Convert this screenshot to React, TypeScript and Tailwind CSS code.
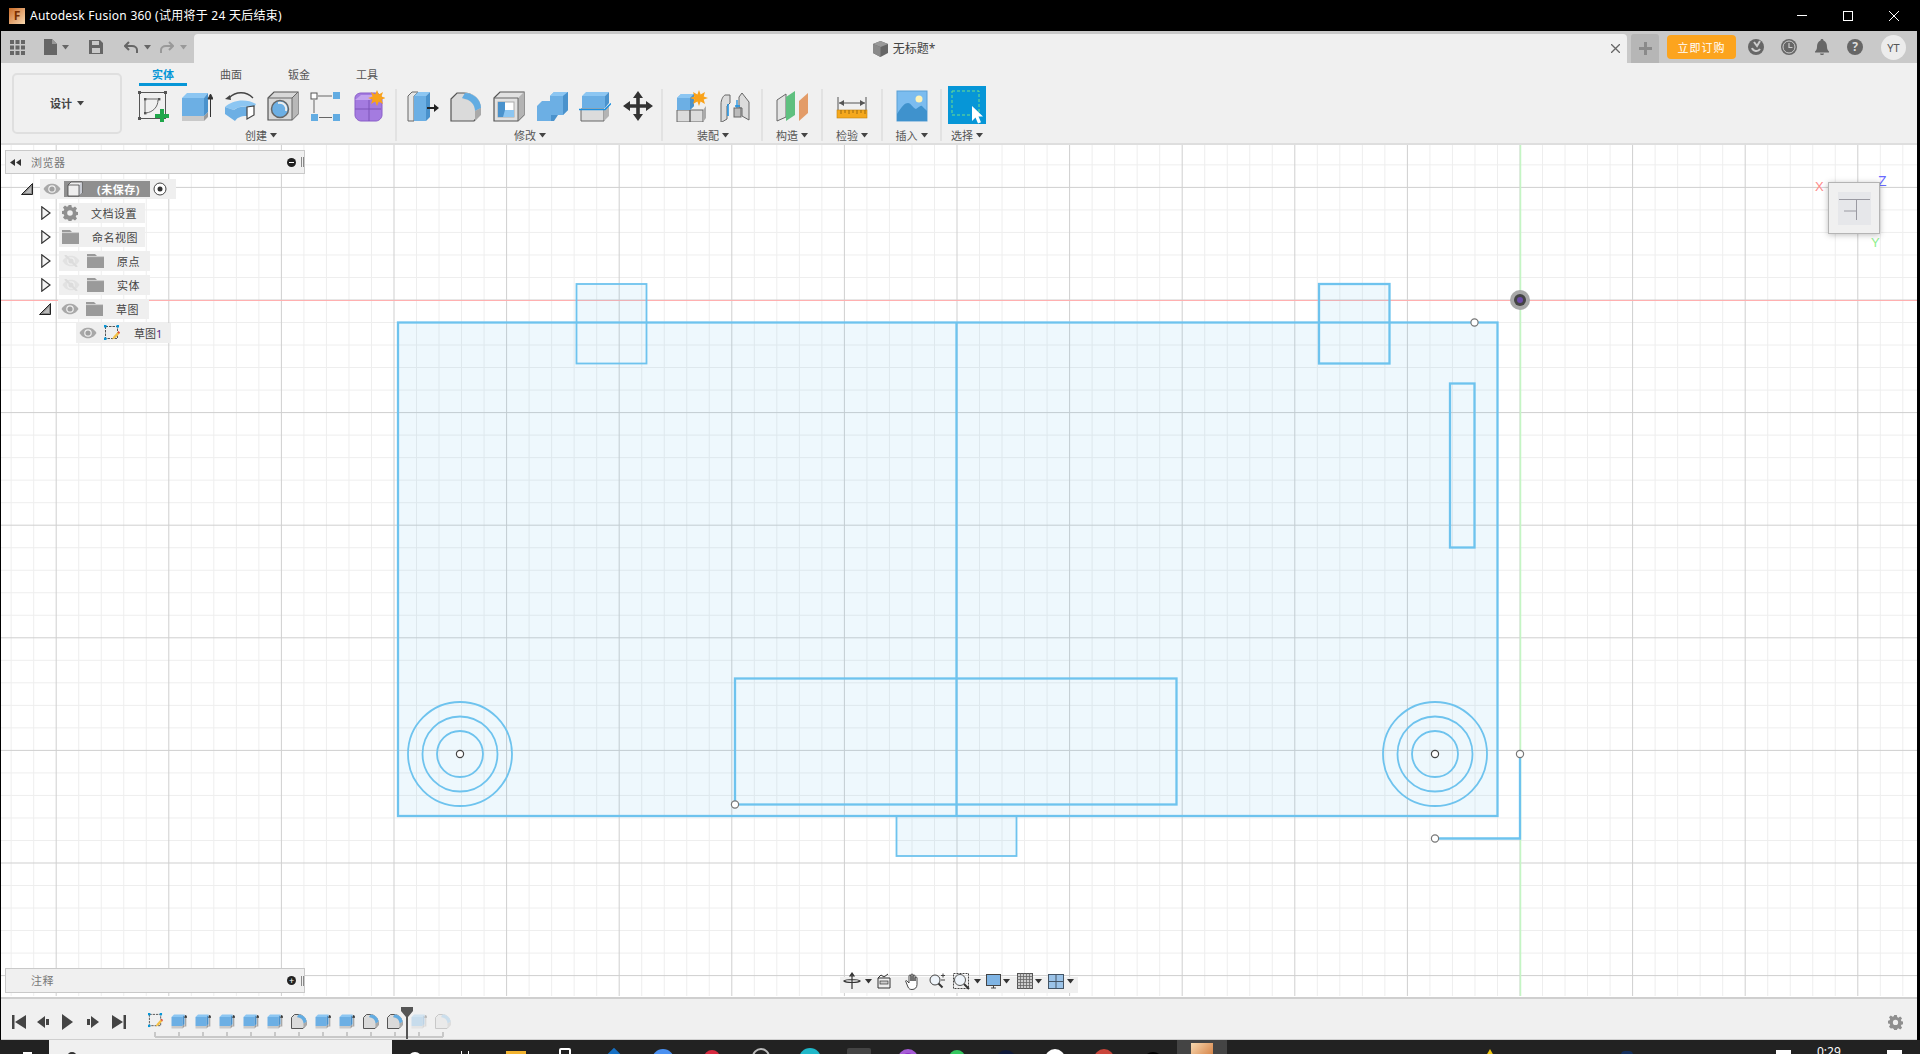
import React from "react";

type P = { s?: number; o?: number };
const V = ({ s = 32, o = 1, w = 32, h = 32, children }: P & { w?: number; h?: number; children: React.ReactNode }) => (
  <svg width={s} height={(s * h) / w} viewBox={`0 0 ${w} ${h}`} opacity={o} className="block shrink-0">
    {children}
  </svg>
);

const SketchIcon = ({ s = 32 }: P) => (
  <V s={s}>
    <rect x="1.5" y="2.5" width="26" height="26" fill="none" stroke="#555" strokeWidth="1" />
    {[[1.5, 2.5], [27.5, 2.5], [1.5, 28.5]].map(([x, y], i) => (
      <rect key={i} x={x - 1.5} y={y - 1.5} width="3" height="3" fill="#555" />
    ))}
    <path d="M7 23V9h14M20 10C20 17 15 22 8 23" fill="none" stroke="#666" strokeWidth="1" />
    <rect x="6" y="8" width="2.4" height="2.4" fill="#555" /><rect x="20" y="8" width="2.4" height="2.4" fill="#555" /><rect x="6" y="22" width="2.4" height="2.4" fill="#555" />
    <path d="M22 19h4v5h5v4h-5v4h-4v-4h-5v-4h5z" fill="#1fa64a" />
  </V>
);
const MiniSketch = ({ s = 15 }: P) => (
  <V s={s}>
    <rect x="3" y="3" width="24" height="24" fill="none" stroke="#555" strokeWidth="2" strokeDasharray="5 2" />
    {[[0, 0], [25, 0], [0, 25]].map(([x, y], i) => (
      <rect key={i} x={x} y={y} width="5" height="5" fill="#0696d7" />
    ))}
    <path d="M16 29l3-6 8-9 4 3-8 9z" fill="#f4c045" /><path d="M27 14l2-2 3 3-2 3z" fill="#e0483a" />
  </V>
);
const Extrude = ({ s = 32, o = 1, arrow = true }: P & { arrow?: boolean }) => (
  <V s={s} o={o}>
    <path d="M1 26h22v5H1z" fill="#c9c9c9" /><path d="M23 26l4-4v5l-4 4z" fill="#9b9b9b" />
    <path d="M1 8h22v18H1z" fill="#6cafe4" /><path d="M1 8l5-5h21l-4 5z" fill="#8cc6f2" /><path d="M23 8l4-5v19l-4 4z" fill="#4a92cc" />
    {arrow && <path d="M29.5 27V6M27 9l2.500-5 2.500 5z" stroke="#333" strokeWidth="1" fill="#333" />}
  </V>
);
const Revolve = () => (
  <V>
    <path d="M5 8C12 1 22 1 29 8" fill="none" stroke="#444" strokeWidth="1.300" /><path d="M1 9l5-4 1 5z" fill="#444" />
    <path d="M1 17C8 10 22 8 32 14l-3 5C22 15 14 16 10 20z" fill="#8cc6f2" />
    <path d="M1 17l9 3c3-3 8-4 13-3v9C16 26 13 28 11 31l-10-7z" fill="#6cafe4" />
    <path d="M23 17l7-1v9l-7 4z" fill="#fff" stroke="#444" strokeWidth="1.200" />
  </V>
);
const Hole = () => (
  <V>
    <path d="M1 8l6-6h24v22l-6 6H1z" fill="#d8d8d8" stroke="#555" strokeWidth="1.200" /><path d="M25 8l6-6v22l-6 6z" fill="#b8b8b8" /><path d="M1 8h24l6-6M25 8v22" fill="none" stroke="#666" />
    <circle cx="13" cy="19" r="8.500" fill="#6cafe4" stroke="#666" strokeWidth="1.500" /><path d="M10 12a8 8 0 0 1 10 9a8 8 0 0 0 -10-9" fill="#fff" /><path d="M11 13c6-1 9 3 8 8" fill="none" stroke="#eee" strokeWidth="2" />
  </V>
);
const Pattern = () => (
  <V>
    <rect x="1" y="3" width="6" height="6" fill="#fff" stroke="#555" /><rect x="23" y="2" width="7" height="7" fill="#62ace2" />
    <rect x="1" y="24" width="7" height="7" fill="#62ace2" /><rect x="23" y="24" width="7" height="7" fill="#62ace2" />
    <path d="M8 6h14M4 10v13M9 27.500h13" stroke="#666" strokeWidth="1" />
  </V>
);
const Form = () => (
  <V>
    <path d="M2 8c0-3 3-5 6-5h14c4 0 7 3 7 7v15c0 3-3 6-6 6H8c-3 0-6-3-6-6z" fill="#a47be0" stroke="#8a5fc9" />
    <path d="M2 19h26M16 9v22" stroke="#7c54b8" strokeWidth="1" /><path d="M2 10l6-5h14l-5 5z" fill="#c3a4ef" />
    <path d="M24 0l1.800 4.500L30 2l-1.500 4.500L33 8l-4.500 1.500L30 14l-4.200-2.500L24 16l-1.800-4.500L18 14l1.500-4.500L15 8l4.500-1.500L18 2l4.200 2.500z" fill="#f9a21a" />
  </V>
);
const PressPull = () => (
  <V>
    <path d="M1 6l4-4h6L7 6v25H1z" fill="#e6e6e6" stroke="#666" />
    <path d="M7 6l4-4h12l-4 4z" fill="#8cc6f2" /><path d="M7 6h12v25H7z" fill="#6cafe4" /><path d="M19 6l4-4v25l-4 4z" fill="#4a92cc" />
    <path d="M20 18h8" stroke="#222" strokeWidth="2" /><path d="M27 14l5 4-5 4z" fill="#222" />
  </V>
);
const Fillet = ({ s = 32, o = 1 }: P) => (
  <V s={s} o={o}>
    <path d="M1 9l6-6h7c8 0 16 6 16 15v6l-6 7H1z" fill="#dadada" stroke="#555" strokeWidth={s < 20 ? 2 : 1.200} />
    <path d="M16 3c8 0 15 6 15 15l-6 7v-5C24 14 21 10 12 9z" fill="#d0d0d0" />
    <path d="M15 3c9 0 16 7 16 15l-6 3c0-6-4-11-10-12l-3-1z" fill="#62ace2" />
    <path d="M25 21l6-3v7l-6 6z" fill="#a9a9a9" />
  </V>
);
const Shell = () => (
  <V>
    <path d="M1 8l6-6h24v23l-6 6H1z" fill="#e2e2e2" stroke="#555" strokeWidth="1.200" /><path d="M25 8l6-6v23l-6 6z" fill="#b4b4b4" /><path d="M1 8h24v23" fill="none" stroke="#666" />
    <rect x="5" y="12" width="16" height="15" fill="#fff" stroke="#aaa" /><path d="M5 12h7v8h9v7H5z" fill="#4a92cc" /><path d="M10 27l2-7h9v7z" fill="#8cc6f2" />
  </V>
);
const Combine = () => (
  <V>
    <path d="M14 6l4-4h14v18l-5 5H14z" fill="#6cafe4" /><path d="M14 6l4-4h14l-5 4z" fill="#8cc6f2" /><path d="M27 6l5-4v18l-5 5z" fill="#4a92cc" />
    <path d="M1 16l5-5h9v20H1z" fill="#6cafe4" /><path d="M15 25h7l-4 6h-3z" fill="#4a92cc" />
  </V>
);
const Split = () => (
  <V>
    <path d="M2 19h23v12H2z" fill="#dcdcdc" stroke="#666" /><path d="M25 20l5-5v11l-5 5z" fill="#b4b4b4" />
    <path d="M3 6l4-4h23l-4 4z" fill="#8cc6f2" /><path d="M3 6h23v12H3z" fill="#6cafe4" /><path d="M26 6l4-4v11l-4 5z" fill="#4a92cc" />
    <path d="M0 19.500h26l6-6" fill="none" stroke="#1a8fe0" strokeWidth="1.500" />
  </V>
);
const Move = () => (
  <V>
    <path d="M16 1l5 7h-3.200v6.200H24V11l7 5-7 5v-3.200h-6.200V24H21l-5 7-5-7h3.200v-6.200H8V21l-7-5 7-5v3.200h6.200V8H11z" fill="#333" />
  </V>
);
const NewJoint = () => (
  <V>
    <path d="M1 20h13v12H1zM14 20h13v12H14z" fill="#dcdcdc" stroke="#666" /><path d="M27 20l3-4v12l-3 4z" fill="#aaa" />
    <path d="M1 8l4-4h13v12l-4 4H1z" fill="#6cafe4" /><path d="M1 8l4-4h13l-4 4z" fill="#8cc6f2" /><path d="M14 8l4-4v12l-4 4z" fill="#4a92cc" />
    <path d="M23 0l1.600 4.500L29 2l-1.300 4.500L32 8l-4.300 1.500L29 14l-4.400-2.500L23 16l-1.600-4.500L17 14l1.300-4.500L14 8l4.300-1.500L17 2l4.400 2.500z" fill="#f9a21a" />
  </V>
);
const Joint = () => (
  <V>
    <path d="M2 14c0-4 2-8 4-9h5v8l-3 3v13l-5 3H2z" fill="#dcdcdc" stroke="#666" /><path d="M23 3l7 9v18l-7-4V18h-3V7z" fill="#dcdcdc" stroke="#666" />
    <path d="M9 14v12" stroke="#1a8fe0" strokeWidth="1.500" /><path d="M18 10v9M16 16h5" stroke="#1a8fe0" strokeWidth="1.300" /><rect x="15" y="18" width="7" height="9" fill="#bbb" stroke="#666" />
  </V>
);
const Plane = () => (
  <V>
    <path d="M1 10l9-6v23l-9 4z" fill="#e4e4e4" stroke="#666" /><path d="M10 7l9-6v24l-9 6z" fill="#5fc07f" /><path d="M23 11l9-8v20l-9 8z" fill="#e39c68" />
  </V>
);
const Measure = () => (
  <V>
    <path d="M2 7v16M30 7v16M3 13h26" stroke="#555" strokeWidth="1" fill="none" /><path d="M3 13l5-3v6zM29 13l-5-3v6z" fill="#555" />
    <rect x="1" y="20" width="30" height="8" fill="#f5a81c" stroke="#c4830e" strokeWidth=".6" />
    <path d="M5 20v4M9 20v3M13 20v4M17 20v3M21 20v4M25 20v3M29 20v4" stroke="#7a5208" strokeWidth=".7" />
  </V>
);
const InsertIcon = () => (
  <V>
    <rect x="1" y="1" width="30" height="30" fill="#7bbcef" stroke="#5b9fd6" />
    <circle cx="23" cy="9" r="3.500" fill="#fdf3b8" />
    <path d="M1 24c5-8 8-11 11-11s5 5 8 6c3-2 5-4 6-3s3 3 5 5v10H1z" fill="#3f92cd" />
  </V>
);
const SelectIcon = () => (
  <div className="w-[38px] h-[38px] bg-[#0696d7] shrink-0">
    <svg width="38" height="38" viewBox="0 0 38 38" className="block">
      <rect x="4" y="5" width="27" height="24" fill="none" stroke="#6fe08a" strokeWidth="1" strokeDasharray="3 2" />
      <path d="M24 20v15l3.500-3.500 2.500 6 3-1.300-2.500-5.700H35z" fill="#fff" />
    </svg>
  </div>
);

const Caret = ({ c = "#444", cls = "" }: { c?: string; cls?: string }) => (
  <svg width="7" height="5" viewBox="0 0 7 5" className={`block shrink-0 ${cls}`}><path d="M0 0h7L3.500 4.500z" fill={c} /></svg>
);

const Group = ({ label, icons, w }: { label: string; icons: React.ReactNode[]; w?: string }) => (
  <div className={`flex flex-col ${w ?? ""}`}>
    <div className="flex h-[38px] justify-center items-start">
      {icons.map((ic, i) => (
        <div key={i} className="w-[43px] flex justify-center shrink-0">{ic}</div>
      ))}
    </div>
    <Label text={label} />
  </div>
);
const Label = ({ text }: { text: string }) => (
  <div className="flex items-center justify-center gap-[3px] h-[14px] text-[11px] leading-none text-[#555]">
    {text}
    <Caret />
  </div>
);
const Sep = ({ ml = "" }: { ml?: string }) => <div className={`w-[2px] h-[52px] bg-[#e2e2e2] mt-[26px] shrink-0 ${ml}`} />;

const Eye = ({ off = false }: { off?: boolean }) => (
  <svg width="18" height="12" viewBox="0 0 18 12" className="block shrink-0">
    <path d="M0.500 6C3 2 6 .8 9 .8S15 2 17.500 6C15 10 12 11.200 9 11.200S3 10 .5 6z" fill={off ? "#e2e2e2" : "#a8a8a8"} />
    <circle cx="9" cy="6" r="3.800" fill="#f0f0f0" />
    <circle cx="9" cy="6" r="2.600" fill={off ? "#dcdcdc" : "#a0a0a0"} />
    {off && <path d="M3 0l12 12" stroke="#dcdcdc" strokeWidth="2" />}
  </svg>
);
const Folder = () => (
  <svg width="17" height="14" viewBox="0 0 17 14" className="block shrink-0">
    <path d="M0 0h8l2 2h7v12H0z" fill="#9a9a9a" /><path d="M0 2.600h17" stroke="#eee" strokeWidth=".7" />
  </svg>
);
const Gear = ({ s = 16, c = "#8f8f8f" }: { s?: number; c?: string }) => (
  <svg width={s} height={s} viewBox="0 0 16 16" className="block shrink-0">
    <path fill={c} fillRule="evenodd" d="M6.600 0h2.800l.4 2.200 1.300.6L13 1.500l2 2-1.300 1.900.6 1.300 2.200.4v2.800l-2.200.4-.6 1.300 1.300 1.900-2 2-1.900-1.300-1.300.6-.4 2.200H6.600l-.4-2.200-1.300-.6L3 14.500l-2-2 1.300-1.900-.6-1.300L-.5 8.900V6.100l2.200-.4.600-1.300L1 2.500l2-2 1.900 1.300 1.300-.6zM8 5.200a2.800 2.800 0 1 0 0 5.600 2.800 2.800 0 0 0 0-5.600z" />
  </svg>
);
const TriOpen = ({ ml }: { ml: string }) => (
  <svg width="12" height="12" viewBox="0 0 12 12" className={`block shrink-0 ${ml}`}>
    <path d="M11.500 .5v11H.5z" fill="#888" stroke="#222" strokeWidth="1" />
    <path d="M10 4v6H4z" fill="#bbb" />
  </svg>
);
const TriClosed = () => (
  <svg width="10" height="14" viewBox="0 0 10 14" className="block shrink-0 ml-[36px]">
    <path d="M.8 .8v12.400L9 7z" fill="#f4f4f4" stroke="#333" strokeWidth="1.200" />
  </svg>
);

const TreeText = ({ t, cls = "" }: { t: string; cls?: string }) => (
  <span className={`text-[11px] leading-none text-[#444] tracking-[0.5px] ${cls}`}>{t}</span>
);

const Tree = () => (
  <div className="flex flex-col gap-[4px] mt-[5px]">
    <div className="flex items-center h-[20px]">
      <TriOpen ml="ml-[16px]" />
      <div className="flex items-center ml-[7px] w-[136px] h-[20px] bg-[#efefef]">
        <div className="ml-[3px]"><Eye /></div>
        <div className="ml-[3px] w-[86px] h-[16px] bg-[#8f8f8f] flex items-center">
          <svg width="16" height="16" viewBox="0 0 16 16" className="block ml-[3px] shrink-0">
            <path d="M1 4l3-3h11v11l-3 3H1z" fill="#eee" stroke="#444" strokeWidth=".8" /><path d="M12 4l3-3v11l-3 3z" fill="#c9ccd4" /><path d="M1 4h11v11" fill="none" stroke="#444" strokeWidth=".8" />
          </svg>
          <span className="ml-[14px] text-[11px] leading-none font-bold text-white tracking-[0.5px]">(未保存)</span>
        </div>
        <svg width="14" height="14" viewBox="0 0 14 14" className="block ml-[3px]"><circle cx="7" cy="7" r="6" fill="#fff" stroke="#444" /><circle cx="7" cy="7" r="2.500" fill="#333" /></svg>
      </div>
    </div>
    {[
      { t: "文档设置", icon: <Gear />, w: "w-[86px]" },
      { t: "命名视图", icon: <Folder />, w: "w-[86px]" },
    ].map((r) => (
      <div key={r.t} className="flex items-center h-[20px]">
        <TriClosed />
        <div className={`flex items-center ml-[8px] h-[20px] bg-[#efefef] pl-[3px] ${r.w}`}>
          {r.icon}
          <TreeText t={r.t} cls="ml-[13px]" />
        </div>
      </div>
    ))}
    {["原点", "实体"].map((t) => (
      <div key={t} className="flex items-center h-[20px]">
        <TriClosed />
        <div className="flex items-center ml-[8px] h-[20px] w-[91px] bg-[#efefef] pl-[3px]">
          <Eye off />
          <div className="ml-[7px]"><Folder /></div>
          <TreeText t={t} cls="ml-[13px]" />
        </div>
      </div>
    ))}
    <div className="flex items-center h-[20px]">
      <TriOpen ml="ml-[34px]" />
      <div className="flex items-center ml-[7px] h-[20px] w-[91px] bg-[#efefef] pl-[3px]">
        <Eye />
        <div className="ml-[7px]"><Folder /></div>
        <TreeText t="草图" cls="ml-[13px]" />
      </div>
    </div>
    <div className="flex items-center h-[20px] ml-[71px] w-[95px] bg-[#efefef] pl-[3px]">
      <Eye />
      <div className="ml-[7px]"><MiniSketch s={16} /></div>
      <span className="ml-[14px] text-[11px] leading-none text-[#444]">草图<span className="text-[#5b2a86]">1</span></span>
    </div>
  </div>
);

const Grip = () => <div className="w-[3px] h-[10px] border-x border-[#888] ml-[5px]" />;

const SketchCanvas = () => {
  const xs: number[] = [];
  const ys: number[] = [];
  for (let i = -70; i <= 20; i++) xs.push(i);
  for (let i = -7; i <= 31; i++) ys.push(i);
  const stroke = "#6ec3ee";
  return (
    <svg width="1916" height="851" viewBox="1 145 1916 851" className="block">
      <rect x="1" y="145" width="1916" height="851" fill="#fff" />
      {xs.filter((i) => i % 5 !== 0).map((i) => <line key={i} x1={1520 + i * 22.52} x2={1520 + i * 22.52} y1="145" y2="996" stroke="#eeeeee" />)}
      {ys.filter((i) => i % 5 !== 0).map((i) => <line key={i} y1={300 + i * 22.52} y2={300 + i * 22.52} x1="1" x2="1917" stroke="#eeeeee" />)}
      {xs.filter((i) => i % 5 === 0).map((i) => <line key={i} x1={1520 + i * 22.52} x2={1520 + i * 22.52} y1="145" y2="996" stroke="#cfcfcf" />)}
      {ys.filter((i) => i % 5 === 0).map((i) => <line key={i} y1={300 + i * 22.52} y2={300 + i * 22.52} x1="1" x2="1917" stroke="#cfcfcf" />)}
      <line x1="1" x2="1917" y1="300.500" y2="300.500" stroke="#ffb0b0" />
      <line x1="1520.500" x2="1520.500" y1="145" y2="996" stroke="#c4f5c4" strokeWidth="1.500" />

      <path d="M398 322H1498V816H398z" fill="#5bbcf0" fillOpacity=".1" />
      <path d="M576.500 284h70v38h-70zM1319 284h70.500v38H1319zM896.500 816h120v40h-120z" fill="#5bbcf0" fillOpacity=".1" />
      <g fill="none" stroke={stroke} strokeWidth="2.300">
        <rect x="398" y="322.500" width="1099.500" height="493.500" />
        <line x1="956.500" x2="956.500" y1="322" y2="816" />
        <rect x="1319" y="284" width="70.500" height="79.500" />
        <rect x="576.500" y="284" width="70" height="79.500" strokeWidth="1.800" />
        <rect x="1450" y="383.500" width="24.500" height="164" />
        <rect x="735" y="678.500" width="441.500" height="126" />
        <rect x="896.500" y="816" width="120" height="40" strokeWidth="1.800" />
        <path d="M1520 754v84.500h-85" />
        <g strokeWidth="1.800">
          <circle cx="460" cy="754" r="52" /><circle cx="460" cy="754" r="37.500" /><circle cx="460" cy="754" r="23" />
          <circle cx="1435" cy="754" r="52" /><circle cx="1435" cy="754" r="37.500" /><circle cx="1435" cy="754" r="23" />
        </g>
      </g>
      <g fill="#fff" stroke="#444" strokeWidth="1.200">
        <circle cx="460" cy="754" r="3.600" /><circle cx="1435" cy="754" r="3.600" />
      </g>
      <g fill="#fff" stroke="#777" strokeWidth="1.200">
        <circle cx="1474.500" cy="322.500" r="3.600" /><circle cx="735" cy="804.500" r="3.600" /><circle cx="1520" cy="754" r="3.600" /><circle cx="1435" cy="838.500" r="3.600" />
      </g>
      <circle cx="1520" cy="300" r="10" fill="#a8a8a8" />
      <circle cx="1520" cy="300" r="6" fill="#444" />
      <circle cx="1520" cy="300" r="3" fill="#6a4aa8" />
    </svg>
  );
};

const tlItems: React.ReactNode[] = [
  <MiniSketch s={15} />, <Extrude s={16} />, <Extrude s={16} />, <Extrude s={16} />, <Extrude s={16} />, <Extrude s={16} />,
  <Fillet s={16} />, <Extrude s={16} />, <Extrude s={16} />, <Fillet s={16} />, <Fillet s={16} />, <Extrude s={16} o={0.3} />, <Fillet s={16} o={0.25} />,
];

const taskColors: React.ReactNode[] = [
  <div className="w-[20px] h-[6px] bg-[#f2b32f] mt-[11px]" />,
  <div className="w-[12px] h-[8px] border-[2px] border-white rounded-t-[2px] mt-[8px]" />,
  <div className="w-[16px] h-[16px] bg-[#1670c4] rotate-45 mt-[11px]" />,
  <div className="w-[22px] h-[22px] bg-[#4a90f0] rounded-full mt-[9px]" />,
  <div className="w-[16px] h-[16px] bg-[#d6293e] rounded-full mt-[10px]" />,
  <div className="w-[18px] h-[18px] border-[2px] border-[#bbb] rounded-full mt-[8px]" />,
  <div className="w-[22px] h-[22px] bg-[#1fb8c9] rounded-full mt-[8px]" />,
  <div className="w-[24px] h-[24px] bg-[#444] rounded-[2px] mt-[8px]" />,
  <div className="w-[20px] h-[20px] bg-[#8a2fc0] rounded-full mt-[9px] border-[4px] border-[#a55ad6]" />,
  <div className="w-[16px] h-[16px] bg-[#33c65e] rounded-full mt-[10px]" />,
  <div className="w-[20px] h-[20px] bg-[#101a3a] rounded-full mt-[10px]" />,
  <div className="w-[20px] h-[20px] bg-white rounded-full mt-[9px]" />,
  <div className="w-[20px] h-[20px] bg-[#c9453a] rounded-full mt-[9px]" />,
  <div className="w-[20px] h-[20px] bg-black rounded-full mt-[12px]" />,
];

export default function App() {
  return (
    <div className="h-screen w-full flex flex-col overflow-hidden bg-black font-['Noto_Sans','Noto_Sans_CJK_SC',sans-serif]">
      {/* title bar */}
      <div className="h-[31px] shrink-0 flex items-center text-white">
        <div className="w-[16px] h-[16px] ml-[9px] bg-gradient-to-br from-[#c96a1e] to-[#f7d9b0] flex items-center justify-center text-[12px] font-bold leading-none text-[#7a2f00]">F</div>
        <span className="ml-[5px] text-[12px] leading-none tracking-[0.25px]">Autodesk Fusion 360 (试用将于 24 天后结束)</span>
        <div className="ml-auto flex items-center mr-[3px]">
          <div className="w-[10px] h-px bg-white mr-[36px]" />
          <div className="w-[10px] h-[10px] border border-white mr-[36px]" />
          <svg width="10" height="10" viewBox="0 0 10 10" className="mr-[18px]"><path d="M0 0l10 10M10 0L0 10" stroke="#fff" /></svg>
        </div>
      </div>

      <div className="flex-1 min-h-0 flex flex-col ml-px mr-[3px]">
        {/* toolbar */}
        <div className="h-[32px] shrink-0 bg-[#c9c9c9] flex">
          <div className="w-[193px] shrink-0 flex items-center pl-[9px]">
            <svg width="15" height="15" viewBox="0 0 15 15"><path fill="#666" d="M0 0h4v4H0zM5.500 0h4v4h-4zM11 0h4v4h-4zM0 5.500h4v4H0zM5.500 5.500h4v4h-4zM11 5.500h4v4h-4zM0 11h4v4H0zM5.500 11h4v4h-4zM11 11h4v4h-4z" /></svg>
            <svg width="13" height="16" viewBox="0 0 13 16" className="ml-[19px]"><path d="M0 0h8l5 5v11H0z" fill="#666" /><path d="M8 0v5h5" fill="#999" /></svg>
            <Caret c="#666" cls="ml-[5px]" />
            <svg width="14" height="14" viewBox="0 0 14 14" className="ml-[20px]"><path fillRule="evenodd" fill="#666" d="M0 0h11l3 3v11H0zM3 1v4h7V1zM3 8v5h8V8z" /></svg>
            <svg width="14" height="13" viewBox="0 0 14 13" className="ml-[21px]"><path d="M5 1L1 5l4 4M1 5h7c3 0 5 2 5 4v3" fill="none" stroke="#666" strokeWidth="2" /></svg>
            <Caret c="#666" cls="ml-[6px]" />
            <svg width="14" height="13" viewBox="0 0 14 13" className="ml-[9px]"><path d="M9 1l4 4-4 4M13 5H6C3 5 1 7 1 9v3" fill="none" stroke="#999" strokeWidth="2" /></svg>
            <Caret c="#999" cls="ml-[6px]" />
          </div>
          <div className="w-[1433px] shrink-0 mt-[3px] bg-[#f0f0f0] rounded-t-[4px] flex items-center relative">
            <div className="flex-1 flex items-center justify-center pl-[3px]">
              <svg width="15" height="16" viewBox="0 0 15 16"><path d="M7.500 0L15 3v9l-7.500 4L0 12V3z" fill="#666" /><path d="M7.500 0L15 3 7.500 6 0 3z" fill="#999" /><path d="M0 3l7.500 3v10L0 12z" fill="#8a8a8a" /></svg>
              <span className="ml-[5px] text-[12px] leading-none text-[#444]">无标题*</span>
            </div>
            <svg width="9" height="9" viewBox="0 0 9 9" className="mr-[7px]"><path d="M0 0l9 9M9 0L0 9" stroke="#666" strokeWidth="1.300" /></svg>
          </div>
          <div className="flex-1 flex">
            <div className="w-[28px] ml-[4px] mt-[3px] rounded-t-[3px] bg-[#b6b6b6] flex items-center justify-center">
              <svg width="13" height="13" viewBox="0 0 13 13"><path d="M5 0h3v5h5v3H8v5H5V8H0V5h5z" fill="#8a8a8a" /></svg>
            </div>
            <div className="w-[69px] h-[24px] ml-[8px] mt-[4px] rounded-[4px] bg-[#fca41e] text-white text-[11px] leading-none flex items-center justify-center tracking-[1px]">立即订购</div>
            <div className="flex items-center ml-[12px]">
              <svg width="16" height="16" viewBox="0 0 16 16"><circle cx="8" cy="8" r="8" fill="#666" /><path d="M4 9a4.500 4.500 0 0 0 8 1M6 3l3 4 3-5" fill="none" stroke="#ccc" strokeWidth="2" /></svg>
              <svg width="16" height="16" viewBox="0 0 16 16" className="ml-[17px]"><circle cx="8" cy="8" r="8" fill="#666" /><circle cx="8" cy="8" r="6" fill="none" stroke="#ccc" /><path d="M8 4v4.500h3.500" fill="none" stroke="#ccc" strokeWidth="1.200" /></svg>
              <svg width="14" height="16" viewBox="0 0 14 16" className="ml-[18px]"><path d="M7 0c1 0 1.500.7 1.500 1.500C11 2.500 12 5 12 8c0 2 1 3.500 2 4.500V13.500H0v-1C1 11.500 2 10 2 8c0-3 1-5.500 3.500-6.500C5.500.7 6 0 7 0zM5 14.500h4C9 15.500 8 16 7 16s-2-.5-2-1.500z" fill="#666" /></svg>
              <div className="w-[16px] h-[16px] ml-[18px] rounded-full bg-[#666] text-[#ddd] text-[12px] font-bold leading-none flex items-center justify-center">?</div>
              <div className="w-[25px] h-[25px] ml-[18px] rounded-full bg-[#ececec] text-[#555] text-[11px] leading-none flex items-center justify-center">YT</div>
            </div>
          </div>
        </div>

        {/* ribbon */}
        <div className="h-[82px] shrink-0 bg-[#f0f0f0] border-b-2 border-[#dedede] flex">
          <div className="w-[110px] h-[61px] ml-[11px] mt-[10px] border-2 border-[#dfdfdf] rounded-[5px] flex items-center justify-center gap-[5px] text-[11px] leading-none font-bold text-[#444] shrink-0">
            设计 <Caret />
          </div>
          <div className="flex flex-col ml-[10px] w-[258px] shrink-0">
            <div className="flex h-[27px] -ml-[3px]">
              {["实体", "曲面", "钣金", "工具"].map((t, i) => (
                <div key={t} className="w-[68px] shrink-0 flex flex-col items-center pt-[3px]">
                  <span className={`text-[11px] leading-[17px] ${i === 0 ? "text-[#0696d7] font-bold" : "text-[#555]"}`}>{t}</span>
                  {i === 0 && <div className="w-[48px] h-[3px] bg-[#0696d7]" />}
                </div>
              ))}
            </div>
            <Group label="创建" icons={[<SketchIcon />, <Extrude />, <Revolve />, <Hole />, <Pattern />, <Form />]} />
          </div>
          <Sep ml="ml-[5px]" />
          <div className="ml-[4px] mt-[27px]">
            <Group label="修改" icons={[<PressPull />, <Fillet />, <Shell />, <Combine />, <Split />, <Move />]} />
          </div>
          <Sep ml="ml-[2px]" />
          <div className="ml-[7px] mt-[27px]">
            <Group label="装配" icons={[<NewJoint />, <Joint />]} />
          </div>
          <Sep ml="ml-[5px]" />
          <div className="mt-[27px]"><Group w="w-[58px]" label="构造" icons={[<Plane />]} /></div>
          <Sep />
          <div className="mt-[27px]"><Group w="w-[58px]" label="检验" icons={[<Measure />]} /></div>
          <Sep />
          <div className="mt-[27px]"><Group w="w-[57px]" label="插入" icons={[<InsertIcon />]} /></div>
          <Sep />
          <div className="w-[50px] mt-[23px] flex flex-col items-center">
            <div className="h-[42px]"><SelectIcon /></div>
            <Label text="选择" />
          </div>
        </div>

        {/* canvas */}
        <div className="flex-1 min-h-0 relative overflow-hidden bg-white">
          <SketchCanvas />
          <div className="absolute left-[4px] top-[5px] w-[300px]">
            <div className="h-[24px] bg-[#f0f0f0] border border-[#c9c9c9] flex items-center text-[11px] leading-none text-[#777]">
              <svg width="11" height="7" viewBox="0 0 11 7" className="ml-[4px]"><path d="M5 0v7L0 3.500zM11 0v7L6 3.500z" fill="#333" /></svg>
              <span className="ml-[10px] tracking-[0.5px]">浏览器</span>
              <div className="ml-auto w-[9px] h-[9px] rounded-full bg-[#222] flex items-center justify-center"><div className="w-[5px] h-px bg-white" /></div>
              <Grip />
            </div>
            <Tree />
          </div>
          <div className="absolute left-[4px] bottom-[4px] w-[300px] h-[25px] bg-[#f0f0f0] border border-[#c9c9c9] flex items-center text-[11px] leading-none text-[#777]">
            <span className="ml-[25px] tracking-[0.5px]">注释</span>
            <div className="ml-auto w-[9px] h-[9px] rounded-full bg-[#222] flex items-center justify-center text-white text-[9px] leading-none">+</div>
            <Grip />
          </div>
          {/* view cube */}
          <div className="absolute left-[1810px] top-[30px] w-[80px] h-[75px]">
            <svg width="80" height="75" viewBox="0 0 80 75" className="block">
              <text x="4" y="16" fontSize="13" fill="#ff8a8a" fontFamily="Liberation Sans">X</text>
              <text x="67" y="11" fontSize="14" fill="#6a6aff" fontFamily="Liberation Sans">Z</text>
              <text x="60" y="72" fontSize="13" fill="#90f090" fontFamily="Liberation Sans">Y</text>
            </svg>
            <div className="absolute left-[17px] top-[7px] w-[52px] h-[52px] bg-[#f0f0f0] border border-[#b4b4b4] shadow-[0_1px_6px_rgba(0,0,0,0.25)] flex items-center justify-center">
              <div className="w-[33px] h-[33px] bg-[#e6e7ea]">
                <svg width="33" height="33" viewBox="0 0 33 33" className="block"><path d="M1 7.500h31M18.500 7.500V28M6 19h12" stroke="#9a9aa2" strokeWidth="1" fill="none" /></svg>
              </div>
            </div>
          </div>
          {/* nav bar */}
          <div className="absolute left-[839px] bottom-[4px] w-[238px] h-[16px] pb-[8px] bg-[#f0f0f0] flex items-center">
            <svg width="18" height="18" viewBox="0 0 18 18" className="ml-[3px] shrink-0"><path d="M9 1v16M9 1L7 4h4zM1 9c2-2 14-2 16 0-2 2-14 2-16 0z" fill="none" stroke="#333" strokeWidth="1.200" /></svg>
            <Caret c="#333" cls="ml-[4px]" />
            <svg width="16" height="16" viewBox="0 0 16 16" className="ml-[4px] shrink-0"><path d="M2 5h12v10H2z" fill="#eee" stroke="#333" /><path d="M2 5l3-3 3 2M8 4l4-3" stroke="#333" fill="none" /><rect x="4" y="8" width="8" height="3" fill="#ccc" stroke="#333" strokeWidth=".7" /></svg>
            <svg width="16" height="17" viewBox="0 0 16 17" className="ml-[11px] shrink-0"><path d="M3 9l2 5c1 2 2 2.500 4 2.500 3 0 5-2 5-5V5a1 1 0 0 0-2 0v3V3a1 1 0 0 0-2 0v5V2a1 1 0 0 0-2 0v6V3a1 1 0 0 0-2 0v7L4 8c-1-1-2 0-1 1z" fill="#fff" stroke="#333" strokeWidth=".9" /></svg>
            <svg width="17" height="16" viewBox="0 0 17 16" className="ml-[10px] shrink-0"><circle cx="6" cy="7" r="5" fill="#eef4fa" stroke="#444" /><path d="M9.500 10.500l4 4" stroke="#333" strokeWidth="2" /><path d="M12 2.500h4M14 .5v4M12 7h4" stroke="#444" /></svg>
            <svg width="17" height="17" viewBox="0 0 17 17" className="ml-[7px] shrink-0"><rect x=".5" y=".5" width="15" height="15" fill="none" stroke="#444" strokeDasharray="2 1" /><circle cx="7" cy="7" r="5.500" fill="#eef4fa" stroke="#555" /><path d="M11 11l5 5" stroke="#333" strokeWidth="2" /></svg>
            <Caret c="#333" cls="ml-[4px]" />
            <svg width="15" height="15" viewBox="0 0 15 15" className="ml-[5px] shrink-0"><rect x=".5" y=".5" width="14" height="11" fill="#7fb4e4" stroke="#444" /><path d="M5 14h5M7.500 11.500V14" stroke="#444" /></svg>
            <Caret c="#333" cls="ml-[2px]" />
            <svg width="16" height="16" viewBox="0 0 16 16" className="ml-[7px] shrink-0"><rect x=".5" y=".5" width="15" height="15" fill="#ccc" stroke="#555" /><path d="M3.500 0v16M6.500 0v16M9.500 0v16M12.500 0v16M0 3.500h16M0 6.500h16M0 9.500h16M0 12.500h16" stroke="#666" strokeWidth=".8" /></svg>
            <Caret c="#333" cls="ml-[2px]" />
            <svg width="16" height="15" viewBox="0 0 16 15" className="ml-[6px] shrink-0"><rect x=".5" y=".5" width="15" height="14" fill="#9bc3e8" stroke="#456" /><path d="M8 0v15M0 7.500h16" stroke="#456" /></svg>
            <Caret c="#333" cls="ml-[3px]" />
          </div>
        </div>

        {/* timeline */}
        <div className="h-[43px] shrink-0 bg-[#f0f0f0] border-t-2 border-[#cfcfcf] border-b border-b-[#cfcfcf] flex items-center">
          <div className="flex ml-[5px] mt-[6px]">
            {[
              "M1 1h2.500v14H1zM15 1v14L4 8z",
              "M9 2v12L1 8zM10 5h3v6h-3z",
              "M1 0v16l11-8z",
              "M5 2v12l8-6zM1 5h3v6H1z",
              "M1 1v14l11-7zM12.500 1H15v14h-2.500z",
            ].map((d, i) => (
              <div key={i} className="w-[25px] flex justify-center">
                <svg width="16" height="16" viewBox="0 0 16 16" className="block"><path d={d} fill="#444" /></svg>
              </div>
            ))}
          </div>
          <div className="relative ml-[12px] h-[40px] w-[312px] flex items-start">
            {tlItems.map((it, i) => (
              <div key={i} className="w-[24px] flex justify-center pt-[14px]">{it}</div>
            ))}
            <svg width="312" height="41" viewBox="0 0 312 41" className="absolute left-0 top-0">
              <path d="M12 38h288" stroke="#c8c8c8" strokeWidth="2" />
              {Array.from({ length: 13 }).map((_, i) => (
                <path key={i} d={`M${12 + i * 24} 33v5`} stroke="#c8c8c8" strokeWidth="2" />
              ))}
              <path d="M258 8h12v4l-5 6v22h-2V18l-5-6z" fill="#555" />
            </svg>
          </div>
          <div className="ml-auto mr-[14px] mt-[6px]"><Gear s={15} c="#8f8f8f" /></div>
        </div>
      </div>

      {/* taskbar */}
      <div className="h-[14px] shrink-0 bg-[#222] flex overflow-hidden">
        <div className="ml-[23px] mt-[12px] w-[9px] h-[2px] bg-white" />
        <div className="ml-[17px] w-[343px] bg-[#f0f0f0] pl-[18px] pt-[12px]">
          <div className="w-[10px] h-[10px] rounded-full border-[2px] border-[#333]" />
        </div>
        <div className="w-[14px] h-[14px] ml-[16px] mt-[12px] rounded-full border-[2px] border-white shrink-0" />
        <div className="ml-[39px] mt-[11px] w-[8px] h-[8px] border-x border-white shrink-0" />
        <div className="flex ml-[22px]">
          {taskColors.map((n, i) => (
            <div key={i} className="w-[49px] flex justify-center shrink-0">{n}</div>
          ))}
          <div className="w-[50px] bg-[#444] flex justify-center shrink-0">
            <div className="w-[22px] h-[22px] mt-[3px] bg-gradient-to-br from-[#f7d9b0] to-[#c96a1e]" />
          </div>
        </div>
        <div className="ml-[259px] mt-[9px] w-0 h-0 border-l-[4px] border-r-[4px] border-b-[7px] border-l-transparent border-r-transparent border-b-[#f2c80f] shrink-0" />
        <div className="ml-[127px] mt-[11px] w-[12px] h-[8px] bg-[#14305e] rounded-full shrink-0" />
        <div className="ml-[143px] mt-[10px] w-[15px] h-[8px] bg-white shrink-0" />
        <span className="ml-[26px] mt-[6px] w-[26px] shrink-0 text-[12px] leading-none text-white">0:29</span>
        <div className="ml-[44px] mt-[10px] w-[15px] h-[8px] bg-white shrink-0" />
      </div>
    </div>
  );
}
